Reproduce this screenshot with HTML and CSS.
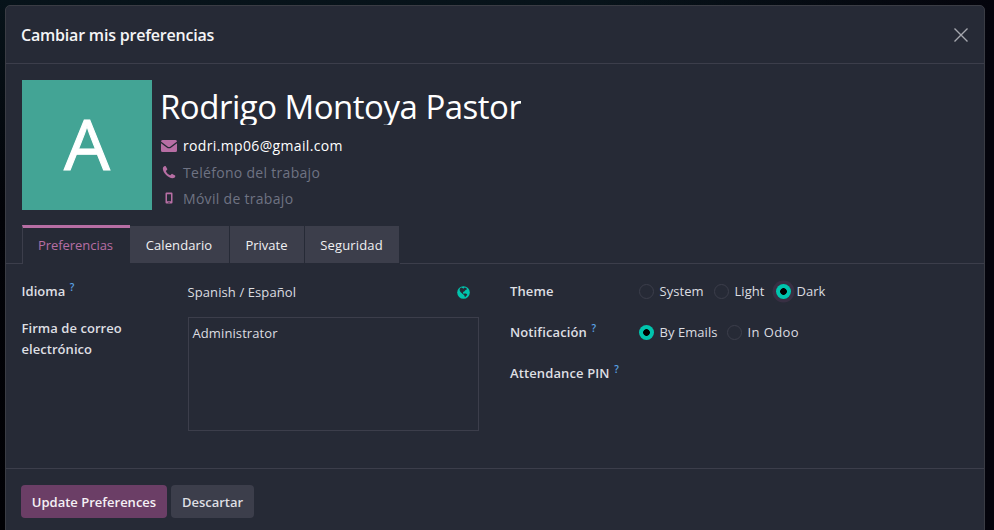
FILE: index.html
```html
<!DOCTYPE html>
<html lang="es">
<head>
<meta charset="utf-8">
<title>Cambiar mis preferencias</title>
<link rel="stylesheet" href="styles.css">
</head>
<body>
<div class="modal">
  <header class="modal-header">
    <h1 class="modal-title">Cambiar mis preferencias</h1>
    <svg class="close" viewBox="0 0 14 14"><path d="M.5.5l13 13M13.500.5l-13 13"/></svg>
  </header>
  <main class="modal-body">
    <section class="profile">
      <div class="avatar"><svg viewBox="0 0 130 130"><text class="avatar-letter" x="65" y="90" text-anchor="middle" textLength="46" lengthAdjust="spacingAndGlyphs">A</text></svg></div>
      <div class="identity">
        <div class="name">Rodrigo Montoya Pastor</div>
        <div class="contact email"><svg class="icon" viewBox="0 0 16 14"><path d="M1.500 1h13A1.500 1.500 0 0 1 16 2.500L9.500 7.400Q8 8.500 6.500 7.400L0 2.500A1.500 1.500 0 0 1 1.500 1zM0 4.200l5.700 4.300Q8 10.200 10.300 8.500L16 4.200v7.300a1.500 1.500 0 0 1-1.500 1.500h-13A1.500 1.500 0 0 1 0 11.500z"/></svg><span>rodri.mp06@gmail.com</span></div>
        <div class="contact phone"><svg class="icon" viewBox="0 0 16 14"><path d="M2.200 2.200C3 1.200 4.200.8 4.700 1.200L6.300 4c.3.800-1.600 1.700-1.400 2.300.8 1.800 2.300 3.200 4.200 4 .7.200 1.400-1.700 2.200-1.400l2.800 1.500c.5.400 0 1.800-.8 2.400C9 15.200 0 7 2.200 2.200z"/></svg><span>Teléfono del trabajo</span></div>
        <div class="contact mobile"><svg class="icon" viewBox="0 0 16 14"><path fill-rule="evenodd" d="M5.500 1.500h5q1 0 1 1v9q0 1-1 1h-5q-1 0-1-1v-9q0-1 1-1zM6 3.300v6.900h4V3.300zM7.400 10.900v.9h1.200v-.9z"/></svg><span>Móvil de trabajo</span></div>
      </div>
    </section>
    <nav class="tabs">
      <div class="tab active">Preferencias</div>
      <div class="tab calendar">Calendario</div>
      <div class="tab private">Private</div>
      <div class="tab security">Seguridad</div>
    </nav>
    <section class="form">
      <div class="group left">
        <div class="label">Idioma <sup>?</sup></div>
        <div class="value language"><span>Spanish / Español</span><svg class="globe" viewBox="0 0 13 13"><circle cx="6.500" cy="6.500" r="6.300"/><path d="M2.800 2.500l1.500-.9 1.200.3.800.8 1.300-1.100 1.600.5.900 1.100-1.500.9-1.400 1.400-1.200.6.200 1.300 1.300.9-.2 1-1.900-1.600L3.500 6 2.600 4.200zM7.400 7.300l2 .5.900 1-1.300 1.500-1 1-.8-2z"/></svg></div>
        <div class="label signature-label">Firma de correo electrónico</div>
        <div class="signature">Administrator</div>
      </div>
      <div class="group right">
        <div class="label">Theme</div>
        <div class="options">
          <span class="option system"><i class="radio"></i>System</span>
          <span class="option light"><i class="radio"></i>Light</span>
          <span class="option"><i class="radio checked focus"></i>Dark</span>
        </div>
        <div class="label">Notificación <sup>?</sup></div>
        <div class="options">
          <span class="option emails"><i class="radio checked"></i>By Emails</span>
          <span class="option odoo"><i class="radio"></i>In Odoo</span>
        </div>
        <div class="label">Attendance PIN <sup>?</sup></div>
      </div>
    </section>
  </main>
  <footer class="modal-footer">
    <button class="button primary">Update Preferences</button>
    <button class="button secondary">Descartar</button>
  </footer>
</div>
</body>
</html>
```

FILE: styles.css
```css
* { box-sizing: border-box; }
body {
  margin: 0;
  height: 530px;
  overflow: hidden;
  padding: 5px 9px 0 5px;
  background: linear-gradient(90deg, transparent 60%, #04040c), linear-gradient(#07131a, #020308 210px, #010105);
  color: #dcdde1;
  font: 13px/21px "Open Sans", "Noto Sans", sans-serif;
}
.modal {
  height: 540px;
  border: 1px solid #3a3c44;
  border-radius: 5px;
  background: #262a36;
}
.modal-header {
  display: flex;
  align-items: center;
  justify-content: space-between;
  height: 58px;
  padding: 0 16px 0 15px;
  border-bottom: 1px solid #3c3e4b;
}
.modal-title { margin: 0; padding-top: 1px; font-size: 16px; font-weight: 600; letter-spacing: -.2px; color: #f5f5f6; }
.close { width: 14px; height: 14px; fill: none; stroke: #a5a7ae; stroke-width: 1.4; }
.modal-body { height: 405px; padding-top: 16px; border-bottom: 1px solid #3c3e4b; }
.profile { display: flex; gap: 8px; height: 145px; padding-left: 16px; }
.avatar { width: 130px; height: 130px; background: #43a495; }
.avatar svg { display: block; width: 130px; height: 130px; }
.avatar-letter { font: 70px "Open Sans", sans-serif; fill: #fff; stroke: #fff; stroke-width: 1px; }
.name {
  height: 45px;
  overflow: hidden;
  padding-top: 7px;
  font-size: 33px;
  line-height: 40px;
  letter-spacing: -.5px;
  white-space: nowrap;
  color: #fff;
}
.contact { display: flex; align-items: center; gap: 4px; height: 26px; padding-left: 1px; font-size: 14px; letter-spacing: .3px; color: #6f7383; }
.contact.email { height: 27px; margin-top: 7px; letter-spacing: .35px; color: #fff; }
.icon { width: 18px; height: 14px; padding-right: 2px; fill: #b76ea4; }
.tabs { display: flex; height: 39px; padding-left: 16px; }
.tabs::before { content: ""; width: 16px; height: 1px; margin: 38px 0 0 -16px; background: #3c3e4b; }
.tabs::after { content: ""; flex: 1; height: 1px; margin-top: 38px; background: #3c3e4b; }
.tab { height: 37px; margin: 1px 1px 0 0; padding-right: 1px; line-height: 38px; text-align: center; background: #3c3e4b; color: #f0f0f2; }
.tab.active {
  width: 108px;
  height: 39px;
  margin: 0;
  padding-right: 2px;
  line-height: 35px;
  letter-spacing: -.05px;
  border-top: 3px solid #b76ea4;
  border-left: 1px solid #3c3e4b;
  background: #262a36;
  color: #b76ea4;
}
.tab.calendar { width: 99px; letter-spacing: .1px; }
.tab.private { width: 74px; }
.tab.security { width: 94px; letter-spacing: .15px; }
.form { display: grid; grid-template-columns: 488px 1fr; padding: 17px 0 0 16px; }
.label { font-weight: 600; letter-spacing: .12px; color: #dedfe3; }
sup { margin-left: 1px; font-size: 10px; line-height: 0; color: #5ba3e6; vertical-align: 5px; }
.group.left { display: grid; grid-template-columns: 166px 291px; grid-template-rows: 37px 114px; align-content: start; }
.group.left .label { margin-left: -.5px; letter-spacing: .05px; }
.value { display: flex; align-items: start; justify-content: space-between; padding-right: 9px; }
.language span { margin-left: -.5px; padding-top: 1px; letter-spacing: .1px; }
.globe { width: 13px; height: 13px; margin-top: 5px; }
.globe circle { fill: #00c4ad; }
.globe path { fill: #262a36; }
.signature-label { width: 125px; }
.signature { margin-top: -1px; height: 114px; border: 1px solid #3c3e4b; padding: 5px 3.5px; letter-spacing: .1px; }
.group.right { display: grid; grid-template-columns: 129px 1fr; grid-auto-rows: 41px; }
.options { display: flex; align-items: start; margin-left: -.5px; }
.option { display: flex; align-items: center; gap: 6px; height: 21px; letter-spacing: .05px; }
.radio { width: 15px; height: 15px; border: 1px solid #3c3e4b; border-radius: 50%; }
.radio.checked { border: 0; background: radial-gradient(circle, #000 3px, #00c4ad 3.7px); }
.radio.focus { box-shadow: 0 0 0 3.5px #382f43; }
.option.system { width: 75px; }
.option.light { width: 62px; }
.option.emails { width: 88px; }
.option.odoo { letter-spacing: .4px; }
.modal-footer { display: flex; gap: 4px; padding: 16px 15px; }
.button {
  width: 83px;
  height: 33px;
  padding: 0;
  border: 0;
  border-radius: 4px;
  background: #3c3e4b;
  color: #dedfe3;
  font: 600 13px "Open Sans", sans-serif;
}
.button.primary { width: 146px; background: #6b3e66; color: #f5f0f5; }
```
